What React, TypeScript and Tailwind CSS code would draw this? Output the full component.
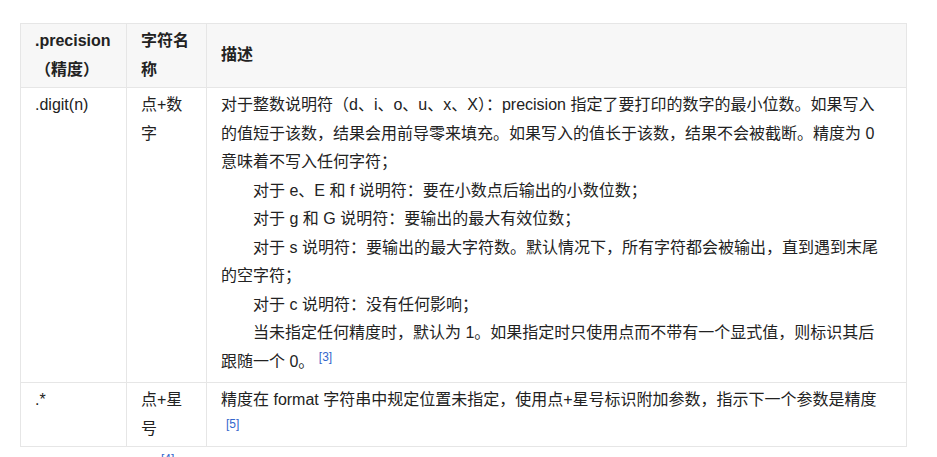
const font = { fontFamily: '"Liberation Sans", "Noto Sans CJK SC", sans-serif' };

const Ref: React.FC<{ n: number; className?: string }> = ({ n, className }) => (
  <sup className={`text-[#3366cc] ${className ?? ""}`}>[{n}]</sup>
);

export default function App() {
  return (
    <div
      className="min-h-screen bg-white pl-[20px] pt-[23px] text-[16px] leading-[28.5px] text-[#222]"
      style={font}
    >
      <table className="table-fixed border-collapse w-[886px]">
        <colgroup>
          <col className="w-[106px]" />
          <col className="w-[80px]" />
          <col className="w-[700px]" />
        </colgroup>
        <thead>
          <tr className="bg-[#f7f7f7]">
            <th className="border border-[#e6e6e6] px-[14px] py-[3px] text-left align-middle font-bold">
              .precision（精度）
            </th>
            <th className="border border-[#e6e6e6] px-[14px] py-[3px] text-left align-middle font-bold">
              字符名称
            </th>
            <th className="border border-[#e6e6e6] px-[14px] py-[3px] text-left align-middle font-bold">
              描述
            </th>
          </tr>
        </thead>
        <tbody>
          {/* .digit(n) */}
          <tr>
            <td className="border border-[#e6e6e6] px-[14px] pt-[3px] pb-[6px] align-top">.digit(n)</td>
            <td className="border border-[#e6e6e6] px-[14px] pt-[3px] pb-[6px] align-top">点+数字</td>
            <td className="border border-[#e6e6e6] px-[14px] pt-[3px] pb-[6px] align-top whitespace-nowrap">
              <p>
                对于整数说明符（d、i、o、u、x、X）：precision 指定了要打印的数字的最小位数。如果写入
                <br />
                的值短于该数，结果会用前导零来填充。如果写入的值长于该数，结果不会被截断。精度为 0
                <br />
                意味着不写入任何字符；
              </p>
              <p className="indent-8">对于 e、E 和 f 说明符：要在小数点后输出的小数位数；</p>
              <p className="indent-8">对于 g 和 G 说明符：要输出的最大有效位数；</p>
              <p className="indent-8">
                对于 s 说明符：要输出的最大字符数。默认情况下，所有字符都会被输出，直到遇到末尾
                <br />
                的空字符；
              </p>
              <p className="indent-8">对于 c 说明符：没有任何影响；</p>
              <p className="indent-8">
                当未指定任何精度时，默认为 1。如果指定时只使用点而不带有一个显式值，则标识其后
                <br />
                跟随一个 0。 <Ref n={3} />
              </p>
            </td>
          </tr>

          {/* .* */}
          <tr>
            <td className="border border-[#e6e6e6] px-[14px] py-[3px] align-top">.*</td>
            <td className="border border-[#e6e6e6] px-[14px] py-[3px] align-top">点+星号</td>
            <td className="border border-[#e6e6e6] px-[14px] py-[3px] align-top whitespace-nowrap">
              精度在 format 字符串中规定位置未指定，使用点+星号标识附加参数，指示下一个参数是精度
              <br />
              <Ref n={5} className="ml-[5px]" />
            </td>
          </tr>
        </tbody>
      </table>

      <div className="mt-[3px] pl-[141px]">
        <Ref n={4} />
      </div>
    </div>
  );
}
